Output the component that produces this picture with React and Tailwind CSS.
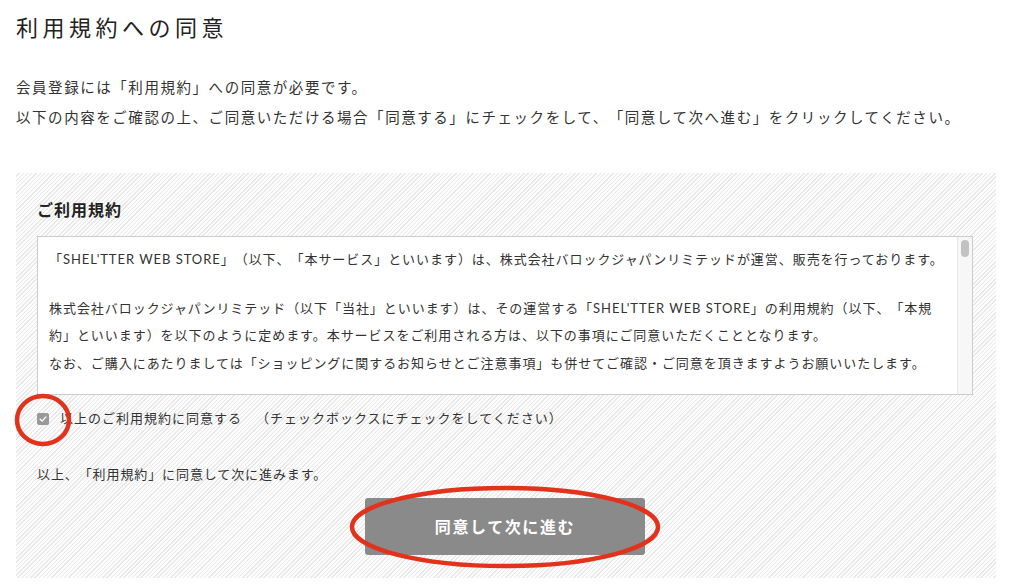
import React from "react";

const font = "font-['Lato','Noto_Sans_CJK_JP',sans-serif] [text-spacing-trim:space-all]";

const TermsBox = () => (
  <div className="flex h-[159px] border border-[#cccccc] bg-white">
    <div className="flex-1 overflow-hidden pl-[11px] pr-3 pt-[9px] text-[13px] leading-[27.5px] tracking-[0.95px] text-[#333]">
      <p>
        「SHEL'TTER WEB STORE」（以下、「本サービス」といいます）は、株式会社バロックジャパンリミテッドが運営、販売を行っております。
      </p>
      <p className="mt-[21px]">
        株式会社バロックジャパンリミテッド（以下「当社」といいます）は、その運営する「SHEL'TTER WEB STORE」の利用規約（以下、「本規
        <br />
        約」といいます）を以下のように定めます。本サービスをご利用される方は、以下の事項にご同意いただくこととなります。
        <br />
        なお、ご購入にあたりましては「ショッピングに関するお知らせとご注意事項」も併せてご確認・ご同意を頂きますようお願いいたします。
      </p>
    </div>
    {/* scrollbar */}
    <div className="w-[15px] shrink-0 border-l border-[#e6e6e6] bg-[#f7f7f7] pt-[3px]">
      <div className="mx-auto h-[17px] w-[8px] rounded-full bg-[#c2c2c2]" />
    </div>
  </div>
);

export default function App() {
  return (
    <div className={`relative h-[586px] w-[1012px] overflow-hidden bg-white ${font}`}>
      <h1 className="pl-4 pt-[12px] text-[22px] leading-8 tracking-[4.5px] text-[#222]">
        利用規約への同意
      </h1>

      <div className="mt-[29px] pl-4 text-[14.5px] leading-[30px] tracking-[1.55px] text-[#333]">
        <p>会員登録には「利用規約」への同意が必要です。</p>
        <p>
          以下の内容をご確認の上、ご同意いただける場合「同意する」にチェックをして、「同意して次へ進む」をクリックしてください。
        </p>
      </div>

      <div className="mx-4 mt-[40px] bg-[repeating-linear-gradient(135deg,#fcfcfc_0px,#fcfcfc_2px,#e8e8e8_2px,#e8e8e8_3px)] pl-[21px] pr-[23px] pt-[25px] pb-[23px]">
        <h2 className="text-[16px] font-bold leading-6 tracking-[1px] text-[#222]">
          ご利用規約
        </h2>

        <div className="mt-[14px]">
          <TermsBox />
        </div>

        <label className="mt-[14px] flex h-5 items-center text-[13px] tracking-[1px] text-[#333]">
          <span className="flex h-[12px] w-[12px] items-center justify-center rounded-[2px] bg-[#999]">
            <svg viewBox="0 0 12 12" className="h-[10px] w-[10px]">
              <path d="M2.5 6.2 L5 8.5 L9.5 3.5" fill="none" stroke="#fff" strokeWidth="1.6" strokeLinecap="round" strokeLinejoin="round" />
            </svg>
          </span>
          <span className="ml-[11px]">以上のご利用規約に同意する　（チェックボックスにチェックをしてください）</span>
        </label>

        <p className="mt-[35px] text-[13px] leading-5 tracking-[0.9px] text-[#333]">
          以上、「利用規約」に同意して次に進みます。
        </p>

        <button className="mx-auto mt-[14px] flex h-[57px] w-[280px] items-center justify-center rounded-[3px] bg-[#8a8a8a] text-[16px] font-bold tracking-[1.6px] text-white">
          同意して次に進む
        </button>
      </div>

      {/* red annotation marks */}
      <svg className="pointer-events-none absolute left-0 top-0" width="1012" height="586">
        <ellipse cx="43" cy="420" rx="26" ry="24" fill="none" stroke="#e3321b" strokeWidth="4.5" />
        <ellipse cx="505" cy="527" rx="153" ry="39" fill="none" stroke="#e3321b" strokeWidth="4.5" />
      </svg>
    </div>
  );
}
